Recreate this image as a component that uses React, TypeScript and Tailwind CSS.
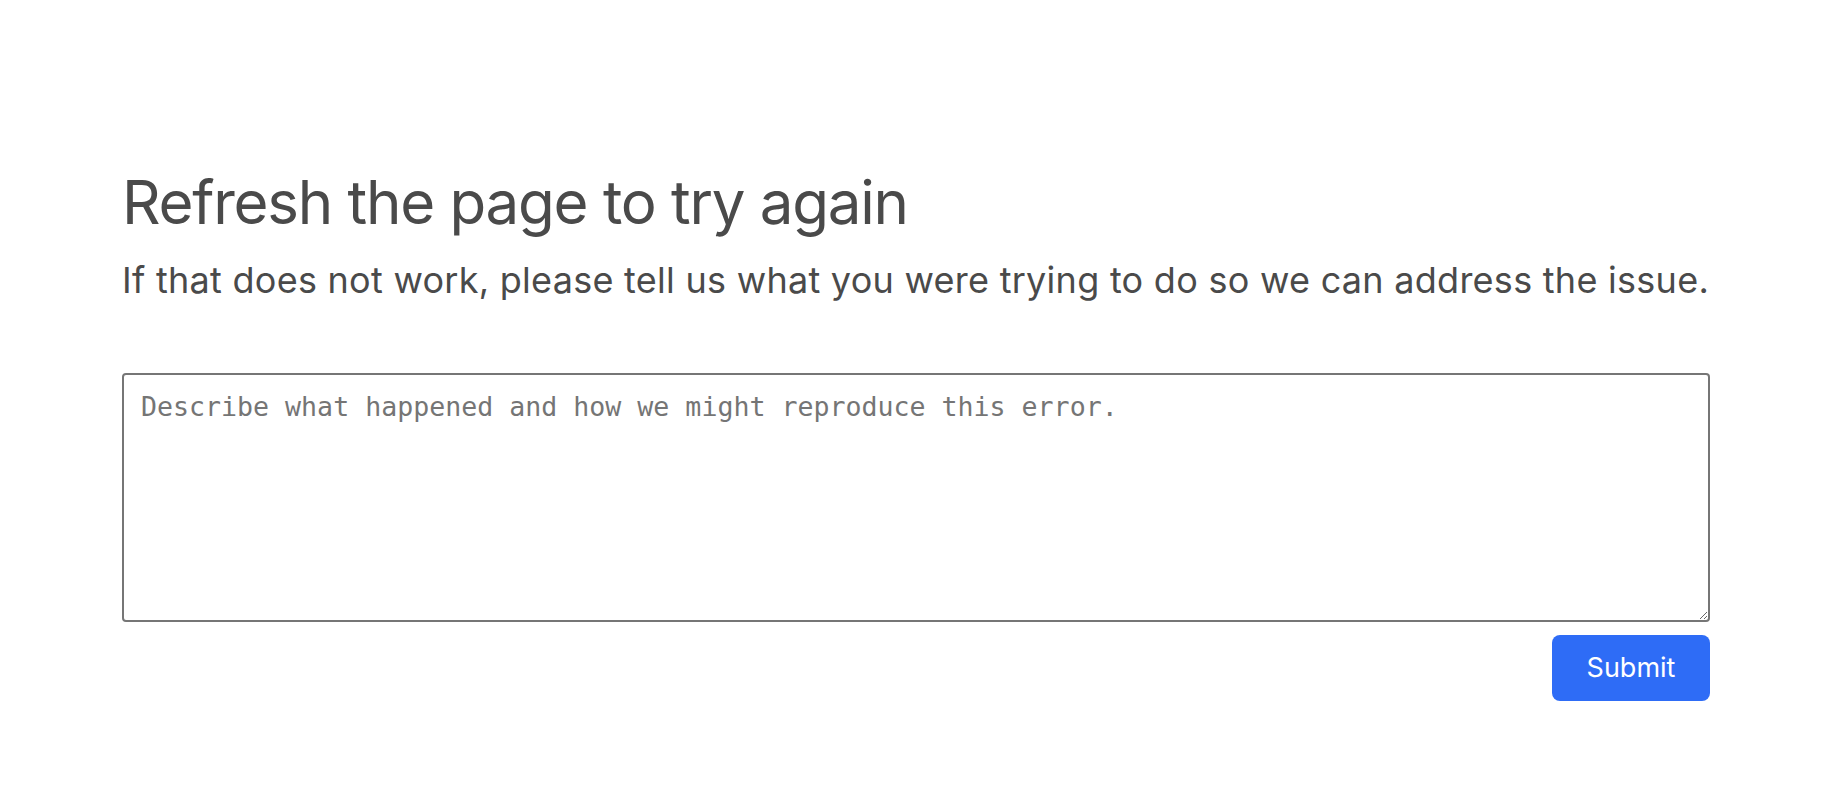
import { useState } from 'react';

export default function App() {
    const [feedback, setFeedback] = useState('');

    return (
        <div className="min-h-screen bg-white font-['Inter','Noto_Sans',sans-serif] text-[#4a4a4a]">
            <div className="mx-auto w-[1588px] pt-[166px]">
                <h1 className="text-[60px] leading-[72px] font-normal tracking-[-1.25px]">Refresh the page to try again</h1>
                <p className="mt-[21px] whitespace-nowrap text-[36px] leading-[43px] tracking-[0.27px]">
                    If that does not work, please tell us what you were trying to do so we can address the issue.
                </p>

                <form className="mt-[71px] flex flex-col" onSubmit={(e) => e.preventDefault()}>
                    <textarea
                        value={feedback}
                        onChange={(e) => setFeedback(e.target.value)}
                        placeholder="Describe what happened and how we might reproduce this error."
                        className="block h-[249px] w-full rounded-[4px] border-2 border-[#767676] px-[17px] py-[12px] font-['DejaVu_Sans_Mono',monospace] text-[26.6px] text-[#333] placeholder-[#757575] outline-none"
                    />
                    <div className="mt-[13px] flex justify-end">
                        <button
                            type="submit"
                            className="h-[66px] w-[158px] rounded-[8px] bg-[#2e6cf6] text-[27px] text-white"
                        >
                            Submit
                        </button>
                    </div>
                </form>
            </div>
        </div>
    );
}
